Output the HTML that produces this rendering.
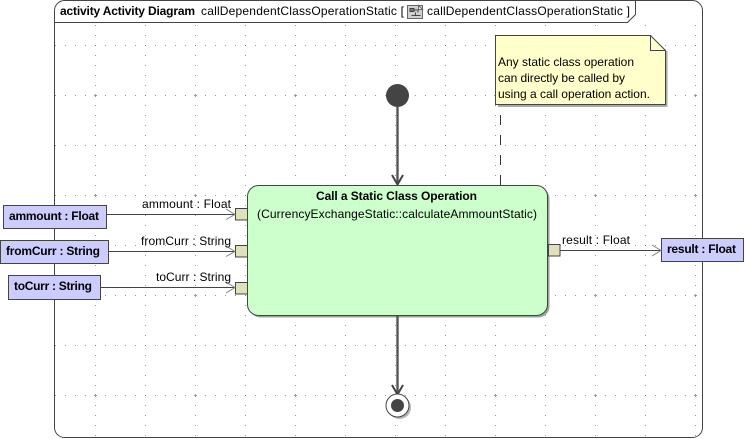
<!DOCTYPE html>
<html>
<head>
<meta charset="utf-8">
<style>
html,body{margin:0;padding:0;background:#fff;width:745px;height:439px;overflow:hidden}
svg{display:block}
text{font-family:"Liberation Sans",Arial,sans-serif;font-size:12px;fill:#000}
.b{font-weight:bold}
</style>
</head>
<body>
<svg width="745" height="439" viewBox="0 0 745 439" xmlns="http://www.w3.org/2000/svg">
<defs>
<pattern id="dots" patternUnits="userSpaceOnUse" x="45" y="45" width="50" height="50">
<rect x="0" y="0" width="1" height="1" fill="#777"/>
<rect x="10" y="0" width="1" height="1" fill="#999"/>
<rect x="20" y="0" width="1" height="1" fill="#999"/>
<rect x="30" y="0" width="1" height="1" fill="#999"/>
<rect x="40" y="0" width="1" height="1" fill="#999"/>
<rect x="0" y="10" width="1" height="1" fill="#999"/>
<rect x="0" y="20" width="1" height="1" fill="#999"/>
<rect x="0" y="30" width="1" height="1" fill="#999"/>
<rect x="0" y="40" width="1" height="1" fill="#999"/>
</pattern>
<pattern id="plus" patternUnits="userSpaceOnUse" x="94" y="94" width="100" height="100">
<rect x="0" y="1" width="3" height="1" fill="#999"/>
<rect x="1" y="0" width="1" height="3" fill="#999"/>
</pattern>
</defs>

<rect x="55" y="23" width="647" height="414" fill="url(#dots)"/>
<rect x="55" y="23" width="647" height="414" fill="url(#plus)"/>

<!-- frame -->
<rect x="54.5" y="0.5" width="648" height="437" rx="10" ry="10" fill="none" stroke="#444" stroke-width="1"/>
<path d="M54.5 22.5H627.5L635.5 14.5V0.5" fill="none" stroke="#444" stroke-width="1"/>
<text class="b" x="60" y="15" textLength="135" lengthAdjust="spacing">activity Activity Diagram</text>
<text x="201" y="15" textLength="203" lengthAdjust="spacing">callDependentClassOperationStatic [</text>
<g>
<rect x="407.500" y="5.500" width="15" height="13" fill="#d0d0d0" stroke="#666"/>
<path d="M418.500 5.500L422.500 9.500H418.500Z" fill="#fff" stroke="#666"/>
<path d="M410 8.500H414V11.500H410Z" fill="#777" stroke="#444"/>
<path d="M414 10H418V12.500M415.500 12.500V15.500M411.500 15.500H420.500" fill="none" stroke="#444"/>
</g>
<text x="427" y="15" textLength="203" lengthAdjust="spacing">callDependentClassOperationStatic ]</text>

<!-- note -->
<path d="M498 104H667V52L665 50V105H498Z" fill="#aaa"/>
<path d="M666 51H667.500V107H498V105H666Z" fill="#aaa"/>
<path d="M495.500 35.500H650.500L665.500 50.500V104.500H495.500Z" fill="#ffffcc" stroke="#444"/>
<path d="M650.500 35.500V50.500H665.500" fill="none" stroke="#444"/>
<text x="498" y="66" textLength="136" lengthAdjust="spacing">Any static class operation</text>
<text x="498" y="82" textLength="127" lengthAdjust="spacing">can directly be called by</text>
<text x="498" y="98" textLength="152" lengthAdjust="spacing">using a call operation action.</text>
<path d="M500.500 115V185" stroke="#333" stroke-width="1" stroke-dasharray="10 10" fill="none"/>

<!-- initial node -->
<circle cx="397.500" cy="95.500" r="11.500" fill="#444"/>
<path d="M397.500 106V184" stroke="#555" stroke-width="2.400" fill="none"/>
<path d="M392 175L397.500 184.500L403 175" stroke="#444" stroke-width="2" fill="none"/>

<!-- action -->
<rect x="249.500" y="187.500" width="300" height="130" rx="11" fill="#a0a0a0"/>
<rect x="247.500" y="185.500" width="300" height="130" rx="11" fill="#ccffcc" stroke="#444"/>
<text class="b" x="316" y="200" textLength="161" lengthAdjust="spacing">Call a Static Class Operation</text>
<text x="257" y="218" textLength="280" lengthAdjust="spacing">(CurrencyExchangeStatic::calculateAmmountStatic)</text>

<!-- pins -->
<g fill="#e0e0bc" stroke="#444">
<rect x="235.500" y="208.500" width="12" height="11.500"/>
<rect x="235.500" y="245.500" width="12" height="11.500"/>
<rect x="235.500" y="282.500" width="12" height="11.500"/>
<rect x="548.500" y="244.500" width="11.500" height="11.500"/>
</g>

<!-- parameter nodes -->
<g fill="#ccccff" stroke="#444">
<rect x="3.500" y="205.500" width="103" height="23"/>
<rect x="0.500" y="240.500" width="108" height="23"/>
<rect x="8.500" y="275.500" width="92" height="24"/>
<rect x="661.500" y="238.500" width="82" height="23"/>
</g>
<text class="b" x="9" y="220" textLength="90" lengthAdjust="spacing">ammount : Float</text>
<text class="b" x="6" y="255" textLength="94" lengthAdjust="spacing">fromCurr : String</text>
<text class="b" x="14" y="290" textLength="78" lengthAdjust="spacing">toCurr : String</text>
<text class="b" x="667" y="253" textLength="69" lengthAdjust="spacing">result : Float</text>

<!-- flows -->
<g fill="none" stroke="#444">
<path d="M107 214.500H235"/>
<path d="M109 251.500H235"/>
<path d="M101 287.500H235"/>
<path d="M560 250.500H661"/>
</g>
<g fill="none" stroke="#808080">
<path d="M226 209L235 214.500L226 219.500"/>
<path d="M226 246L235 251.500L226 256.500"/>
<path d="M226 282L235 287.500L226 293"/>
<path d="M652 245L661 250.500L652 256"/>
</g>
<text x="142" y="208" textLength="89" lengthAdjust="spacing">ammount : Float</text>
<text x="141" y="245" textLength="90" lengthAdjust="spacing">fromCurr : String</text>
<text x="156" y="281" textLength="75" lengthAdjust="spacing">toCurr : String</text>
<text x="562" y="244" textLength="68" lengthAdjust="spacing">result : Float</text>

<!-- final node -->
<path d="M397.500 316V393" stroke="#555" stroke-width="2.400" fill="none"/>
<path d="M392 385L397.500 394.500L403 385" stroke="#444" stroke-width="2" fill="none"/>
<circle cx="399.500" cy="407.500" r="11.500" fill="#b5b5b5"/>
<circle cx="397.500" cy="405.500" r="11.500" fill="#fff" stroke="#444"/>
<circle cx="397.500" cy="405.500" r="6.500" fill="#444"/>
</svg>
</body>
</html>
